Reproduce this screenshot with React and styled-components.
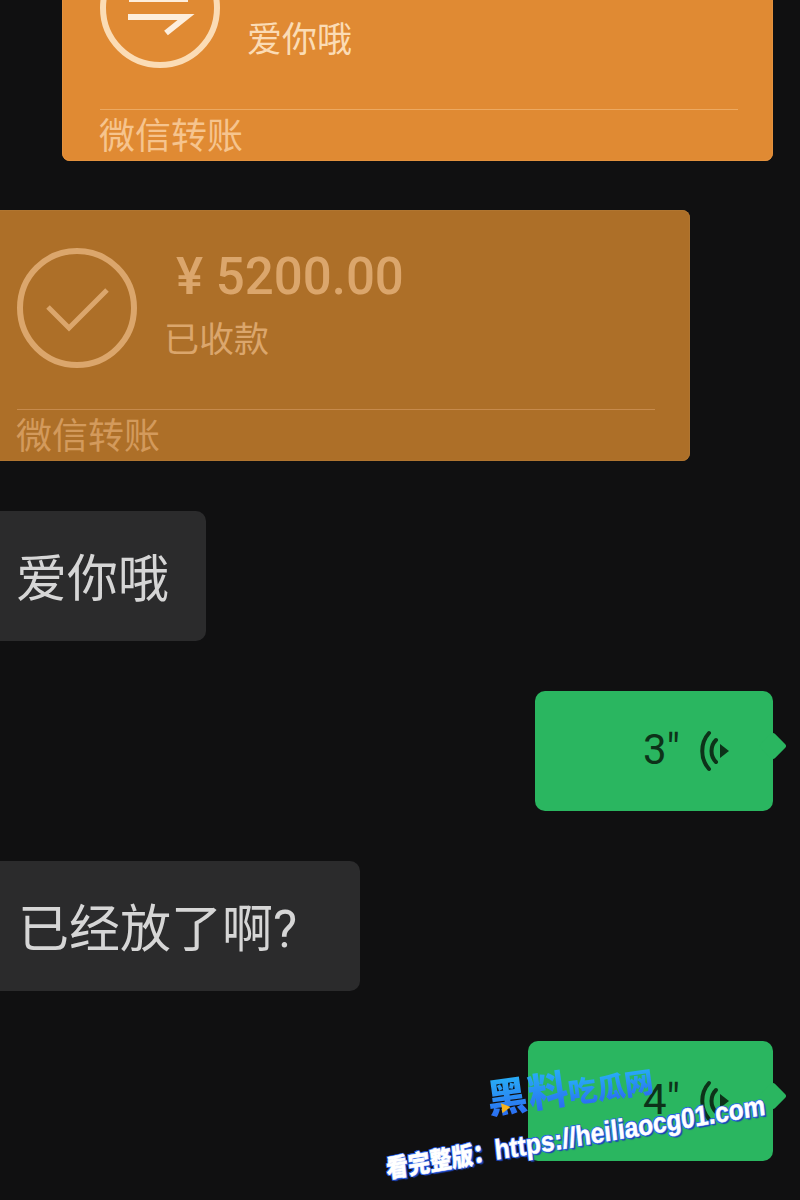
import React from "react";
import styled, { createGlobalStyle } from "styled-components";

const Global = createGlobalStyle`
  html, body {
    margin: 0;
    padding: 0;
    background: #101011;
  }
`;

const Page = styled.div`
  position: relative;
  width: 800px;
  height: 1200px;
  overflow: hidden;
  background: #101011;
  font-family: Roboto, "Noto Sans CJK SC", sans-serif;
`;

const Chat = styled.div`
  display: flex;
  flex-direction: column;
  gap: 50px;
  margin-top: -90px;
`;

const Card = styled.div`
  box-sizing: border-box;
  width: 711px;
  height: 251px;
  padding: 0 35px 0 38px;
  border-radius: 8px;
  display: flex;
  flex-direction: column;
  align-self: flex-start;
  margin-left: ${p => (p.$received ? "-21px" : "62px")};
  margin-bottom: ${p => (p.$received ? "0" : "-1px")};
  background: ${p => (p.$received ? "#ad6f28" : "#e08a33")};
  box-shadow: inset 0 0 0 1px ${p => (p.$received ? "#b07530" : "#e3913d")};
  color: ${p => (p.$received ? "#dba66c" : "#fbdcb5")};
`;

const CardBody = styled.div`
  box-sizing: border-box;
  flex: none;
  height: 200px;
  display: flex;
  align-items: center;
  gap: 27px;
  border-bottom: 1px solid ${p => (p.$received ? "#c68a4c" : "#eca961")};
`;

const CircleIcon = styled.svg`
  width: 120px;
  height: 120px;
  flex: none;
  margin-top: -4px;
`;

const CardText = styled.div`
  display: flex;
  flex-direction: column;
  gap: 19px;
`;

const Amount = styled.div`
  font-size: 51px;
  line-height: 46px;
  font-weight: 500;
  padding-left: 12px;
  margin-top: -3px;
  white-space: pre;
`;

const Note = styled.div`
  font-size: 35px;
  line-height: 44px;
`;

const CardFooter = styled.div`
  font-size: 36px;
  line-height: 48px;
  padding-top: 3px;
  margin-left: -1px;
  color: ${p => (p.$received ? "#d39a5c" : "#f6c48e")};
`;

const TextBubble = styled.div`
  align-self: flex-start;
  box-sizing: border-box;
  height: 130px;
  margin-left: -21px;
  padding: 0 ${p => p.$end}px 3px ${p => p.$inset}px;
  display: flex;
  align-items: center;
  border-radius: 10px;
  background: #2b2b2c;
  color: #d6d6d6;
  font-size: 51px;
`;

const VoiceBubble = styled.div`
  position: relative;
  align-self: flex-end;
  box-sizing: border-box;
  width: ${p => p.$width}px;
  height: 120px;
  margin-right: 27px;
  padding-right: 44px;
  display: flex;
  align-items: center;
  justify-content: flex-end;
  gap: 19px;
  border-radius: 10px;
  background: #2ab660;
  color: #0d3219;
  font-size: 42px;

  &::after {
    content: "";
    position: absolute;
    right: -10px;
    top: 45px;
    width: 20px;
    height: 20px;
    background: #2ab660;
    transform: rotate(45deg);
    border-radius: 3px;
  }
`;

const Seconds = styled.span`
  margin-top: -4px;
`;

const VoiceIcon = styled.svg`
  width: 30px;
  height: 42px;
  flex: none;
`;

const Watermark = styled.div`
  position: absolute;
  left: 388px;
  top: 1058px;
  width: 400px;
  height: 130px;
`;

const WatermarkLogo = styled.div`
  position: absolute;
  left: 102px;
  top: 17px;
  display: flex;
  align-items: flex-end;
  font-family: "Noto Sans CJK SC", sans-serif;
  font-weight: 900;
  transform: rotate(-8deg);
  transform-origin: left bottom;
`;

const LogoChar = styled.span`
  font-size: ${p => p.$size}px;
  line-height: 1.1;
  width: ${p => p.$width}px;
  display: inline-block;
  background: linear-gradient(180deg, #27b4f6, #2b6cf2);
  -webkit-background-clip: text;
  background-clip: text;
  color: transparent;
`;

const PlayMark = styled.svg`
  position: absolute;
  left: 13px;
  bottom: 4px;
  width: 9px;
  height: 10px;
`;

const WatermarkLink = styled.div`
  position: absolute;
  left: 0;
  top: 93px;
  white-space: nowrap;
  font-family: "Liberation Sans", "Noto Sans CJK SC", sans-serif;
  font-weight: 700;
  font-size: 28px;
  line-height: 32px;
  color: #fff;
  -webkit-text-stroke: 0.5px #fff;
  text-shadow: 1px 1px 0 #2b5fe0, -1px 1px 0 #2b5fe0, 1px -1px 0 #2b5fe0, -1px -1px 0 #2b5fe0, 2px 2px 1px #1c3fb0;
  transform: rotate(-9.5deg) scaleX(0.88) skewX(-4deg);
  transform-origin: left bottom;
`;

const LinkCjk = styled.span`
  font-family: "Noto Sans CJK SC", sans-serif;
  font-weight: 900;
  font-size: 25px;
`;

const TransferCard = ({ received, note, icon }) => (
  <Card $received={received}>
    <CardBody $received={received}>
      <CircleIcon viewBox="0 0 120 120" fill="none" stroke="currentColor" strokeWidth="6">
        <circle cx="60" cy="60" r="57" />
        {icon}
      </CircleIcon>
      <CardText>
        <Amount>¥ 5200.00</Amount>
        <Note>{note}</Note>
      </CardText>
    </CardBody>
    <CardFooter $received={received}>微信转账</CardFooter>
  </Card>
);

const VoiceMessage = ({ width, seconds }) => (
  <VoiceBubble $width={width}>
    <Seconds>{seconds}"</Seconds>
    <VoiceIcon viewBox="0 0 30 42" fill="none" stroke="currentColor" strokeWidth="4" strokeLinecap="round">
      <path d="M10 3 C1 13 1 29 10 39" />
      <path d="M17 10 C11 16 11 26 17 32" />
      <path d="M21 14 L30 21 L21 28 Z" fill="currentColor" stroke="none" />
    </VoiceIcon>
  </VoiceBubble>
);

export default function App() {
  return (
    <Page>
      <Global />
      <Chat>
        <TransferCard
          note="爱你哦"
          icon={
            <g stroke="#fdeedd" strokeWidth="6">
              <path d="M29 51 H88" />
              <path d="M28 69 H86 L66 85" />
            </g>
          }
        />
        <TransferCard received note="已收款" icon={<path d="M31 59 L52 80 L90 42" strokeWidth="5" />} />
        <TextBubble $inset={37} $end={37}>爱你哦</TextBubble>
        <VoiceMessage width={238} seconds={3} />
        <TextBubble $inset={39} $end={63}>已经放了啊?</TextBubble>
        <VoiceMessage width={245} seconds={4} />
      </Chat>
      <Watermark>
        <WatermarkLogo>
          <LogoChar $size={40} $width={41}>黑</LogoChar>
          <LogoChar $size={40} $width={40}>料</LogoChar>
          <LogoChar $size={29} $width={29}>吃</LogoChar>
          <LogoChar $size={29} $width={28}>瓜</LogoChar>
          <LogoChar $size={29} $width={29}>网</LogoChar>
          <PlayMark viewBox="0 0 9 10">
            <path d="M0 0 L9 5 L0 10 Z" fill="#f5b21b" />
          </PlayMark>
        </WatermarkLogo>
        <WatermarkLink>
          <LinkCjk>看完整版：</LinkCjk>https://heiliaocg01.com
        </WatermarkLink>
      </Watermark>
    </Page>
  );
}
